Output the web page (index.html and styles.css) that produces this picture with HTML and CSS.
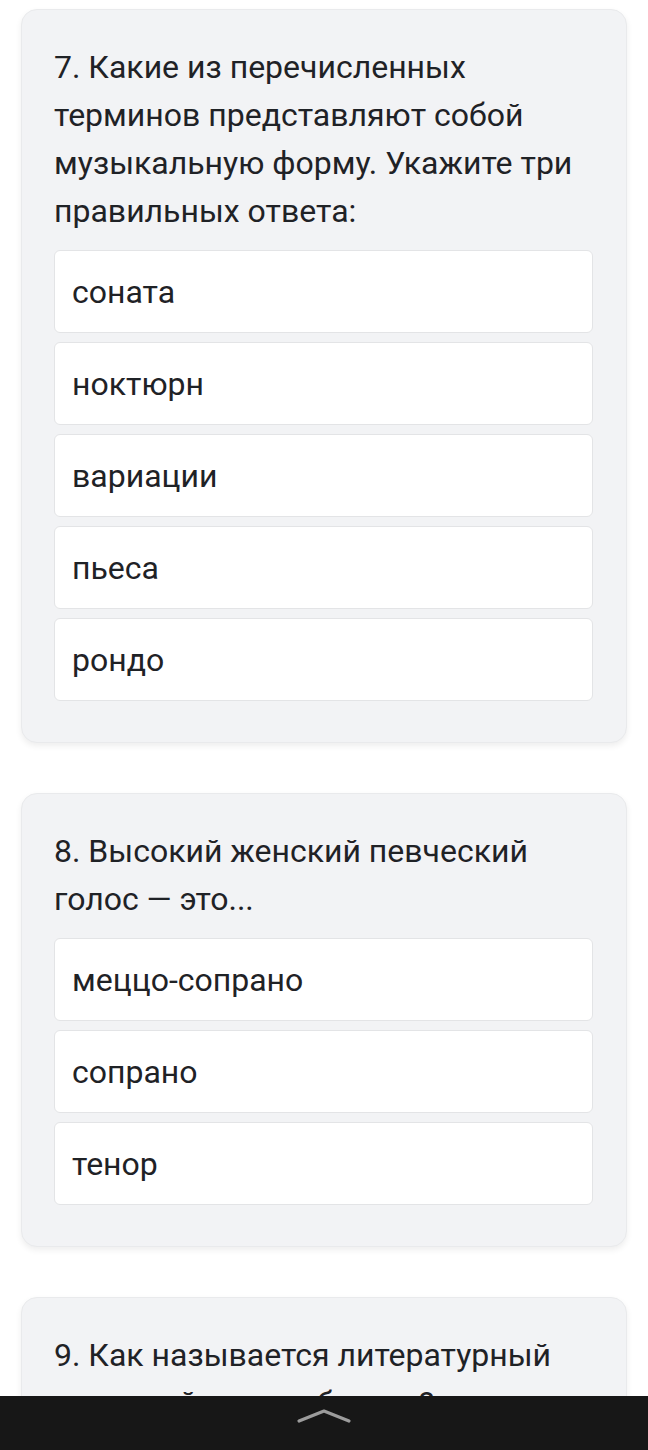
FILE: index.html
```html
<!DOCTYPE html>
<html>
	<head>
		<meta charset="UTF-8">
		<title>Тест</title>
		<link rel="stylesheet" href="styles.css">
	</head>
	<body>
		<div class="list">
			<div class="card">
				<div class="title">7. Какие из перечисленных терминов представляют собой музыкальную форму. Укажите три правильных ответа:</div>
				<ul class="options">
					<li>соната</li>
					<li>ноктюрн</li>
					<li>вариации</li>
					<li>пьеса</li>
					<li>рондо</li>
				</ul>
			</div>
			<div class="card">
				<div class="title">8. Высокий женский певческий голос — это...</div>
				<ul class="options">
					<li>меццо-сопрано</li>
					<li>сопрано</li>
					<li>тенор</li>
				</ul>
			</div>
			<div class="card">
				<div class="title">9. Как называется литературный сценарий оперы, балета?</div>
				<ul class="options">
					<li>либретто</li>
					<li>партитура</li>
				</ul>
			</div>
		</div>
		<div class="navbar">
			<svg width="56" height="16" viewBox="0 0 56 16">
				<polyline points="3,13 28,3 53,13" fill="none" stroke="#9c9c9c" stroke-width="3.2" stroke-linecap="round" stroke-linejoin="round"/>
			</svg>
		</div>
	</body>
</html>
```

FILE: styles.css
```css
html, body{
	margin: 0;
	padding: 0;
	background: #fff;
}
body{
	font-family: Roboto, "Noto Sans", sans-serif;
	color: #1f2226;
}
ul{
	padding: 0;
	margin: 0;
	list-style: none;
}
.list{
	padding: 9px 21px 0;
	display: flex;
	flex-direction: column;
	gap: 50px;
}
.card{
	background: #f2f3f5;
	border: 1px solid #e9eaec;
	border-radius: 16px;
	padding: 33px 33px 41px 32px;
	box-shadow: 0 3px 6px rgba(0, 0, 0, 0.07);
}
.title{
	font-size: 32px;
	line-height: 48px;
	margin-bottom: 15px;
}
.options{
	display: flex;
	flex-direction: column;
	gap: 9px;
}
.options li{
	background: #fff;
	border: 1px solid #e3e4e6;
	border-radius: 6px;
	box-sizing: border-box;
	height: 83px;
	padding: 0 17px;
	display: flex;
	align-items: center;
	font-size: 32px;
}
.navbar{
	position: fixed;
	left: 0;
	right: 0;
	bottom: 0;
	height: 54px;
	background: #171717;
	display: flex;
	justify-content: center;
	padding-top: 12px;
	box-sizing: border-box;
}
```
